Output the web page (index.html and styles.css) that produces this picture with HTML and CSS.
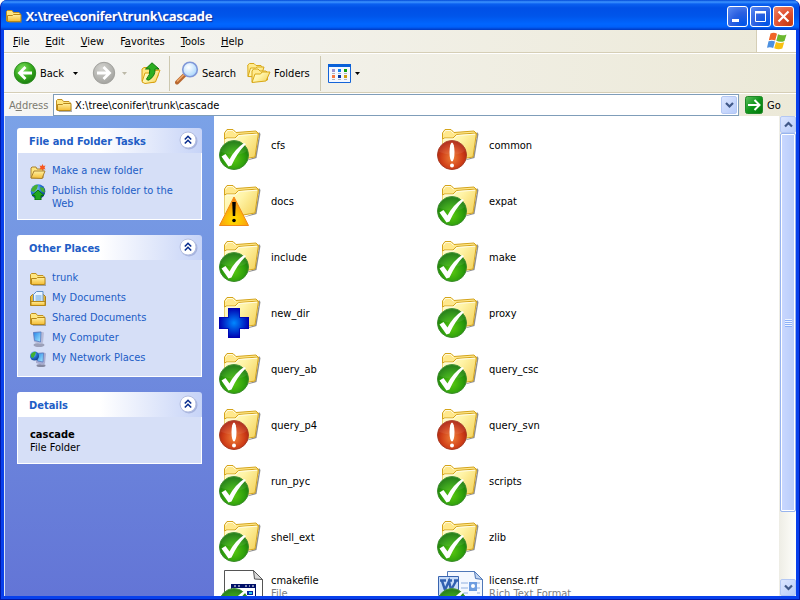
FILE: index.html
```html
<!DOCTYPE html>
<html lang="en">
<head>
<meta charset="utf-8">
<title>X:\tree\conifer\trunk\cascade</title>
<link rel="stylesheet" href="styles.css">
</head>
<body>
<svg class="defs" aria-hidden="true">
  <defs>
    <linearGradient id="gFolder" x1="0" y1="0" x2="1" y2=".6"><stop offset="0" stop-color="#fffdd0"/><stop offset=".5" stop-color="#fff4a8"/><stop offset="1" stop-color="#f6d868"/></linearGradient>
    <linearGradient id="gSmall" x1="0" y1="0" x2="0" y2="1"><stop offset="0" stop-color="#fff0a0"/><stop offset="1" stop-color="#f4bc34"/></linearGradient>
    <radialGradient id="gOk" cx=".5" cy=".65" r=".6"><stop offset="0" stop-color="#58c810"/><stop offset=".6" stop-color="#2fa00c"/><stop offset="1" stop-color="#187808"/></radialGradient>
    <radialGradient id="gBad" cx=".5" cy=".6" r=".6"><stop offset="0" stop-color="#f08038"/><stop offset=".6" stop-color="#d04018"/><stop offset="1" stop-color="#a81c0c"/></radialGradient>
    <radialGradient id="gWarn" cx=".5" cy=".8" r=".7"><stop offset="0" stop-color="#ffe000"/><stop offset="1" stop-color="#f88810"/></radialGradient>
    <radialGradient id="gPlus"><stop offset="0" stop-color="#0088ff"/><stop offset="1" stop-color="#0000b0"/></radialGradient>
    <radialGradient id="gBack" cx=".4" cy=".3" r=".7"><stop offset="0" stop-color="#7ee060"/><stop offset=".6" stop-color="#35a81c"/><stop offset="1" stop-color="#1c8010"/></radialGradient>
    <radialGradient id="gFwd" cx=".4" cy=".3" r=".7"><stop offset="0" stop-color="#d4d4d0"/><stop offset="1" stop-color="#a4a4a0"/></radialGradient>
    <radialGradient id="gLens" cx=".4" cy=".35" r=".7"><stop offset="0" stop-color="#ffffff"/><stop offset="1" stop-color="#a4d4fc"/></radialGradient>
    <linearGradient id="gGo" x1="0" y1="0" x2="1" y2="1"><stop offset="0" stop-color="#60c060"/><stop offset=".5" stop-color="#10951c"/><stop offset="1" stop-color="#007808"/></linearGradient>
    <linearGradient id="gScreen" x1="0" y1="0" x2="1" y2="1"><stop offset="0" stop-color="#2484e8"/><stop offset="1" stop-color="#a8ecff"/></linearGradient>
    <radialGradient id="gGlobe" cx=".35" cy=".3" r=".8"><stop offset="0" stop-color="#90d8ff"/><stop offset=".5" stop-color="#2470d0"/><stop offset="1" stop-color="#103880"/></radialGradient>
  </defs>
  <symbol id="folder" viewBox="0 0 48 48">
    <path d="M24 39.500 37.500 36 41.500 12 40 10v3l-4 22z" fill="#444" opacity=".6"/>
    <path d="M5.500 36V11L8 7.500h6l3 3L37 9l2 2v5L16 38z" fill="#ffe88c" stroke="#d4a41c"/>
    <path d="M6.500 11.500 8.500 8.500h5l3 3" fill="none" stroke="#fffbe0"/>
    <path d="M5.500 37.500V17.500l1.500-1.500h9l3.500-3.500 20-1.500-3.500 24-18 3z" fill="url(#gFolder)"/>
    <path d="M6 17l1-1h9l3.500-3.500 20-1.500-3.500 24-18 3" fill="none" stroke="#d4a41c"/>
    <path d="M7.500 17h9l3.500-3.500 18-1.300" fill="none" stroke="#fffce8"/>
  </symbol>
  <symbol id="ok" viewBox="0 0 48 48">
    <circle cx="15" cy="33" r="14.500" fill="url(#gOk)" stroke="#3c8c2c"/>
    <path d="M2 30a13 12 0 0 1 26-1Q18 36 2 30z" fill="#fff" opacity=".08"/>
    <path d="M2.500 34.500l4-2.500 4 5.500Q16 27 25 21l2 1Q18 31 12.500 43.500l-3 1z" fill="#fff"/>
  </symbol>
  <symbol id="bad" viewBox="0 0 48 48">
    <circle cx="15" cy="33" r="14.500" fill="url(#gBad)" stroke="#a83c24"/>
    <path d="M2 30a13 12 0 0 1 26-1Q18 36 2 30z" fill="#fff" opacity=".08"/>
    <ellipse cx="15" cy="30" rx="2.500" ry="9.500" fill="#fff"/><circle cx="15" cy="43.500" r="2" fill="#fff"/>
  </symbol>
  <symbol id="warn" viewBox="0 0 48 48">
    <path d="M15 19 29.500 47.500H.5z" fill="url(#gWarn)" stroke="#f08818"/>
    <path d="M13.200 24h3.600l-.6 14h-2.400z"/><circle cx="15" cy="42.500" r="1.800"/>
  </symbol>
  <symbol id="plus" viewBox="0 0 48 48">
    <path d="M9 18h12v9h9v12h-9v9H9v-9H0V27h9z" fill="url(#gPlus)"/>
    <path d="M9.500 18.500h11v9h9v11h-9v9h-11v-9h-9v-11h9z" fill="none" stroke="#0000b0" opacity=".7"/>
  </symbol>
  <symbol id="small-folder" viewBox="0 0 16 16">
    <path d="M2 13h13.500V6l.5 9H3z" fill="#777" opacity=".6"/>
    <path d="M.5 13V3.500l1-1h4.500l1.500 2H13l1 1V13z" fill="#ffe680" stroke="#c09020"/>
    <path d="M1.500 13.500v-6h5l1-1h7.500V13l-1 .5z" fill="url(#gSmall)" stroke="#b88818"/>
  </symbol>
  <symbol id="chevrons" viewBox="0 0 20 20">
    <circle cx="11" cy="11" r="8.500" fill="#7080b8" opacity=".4"/>
    <circle cx="10" cy="10" r="8" fill="#fff" stroke="#b4bee0"/>
    <path d="m6.800 9.500 3.200-3.200 3.200 3.200m-6.400 4 3.200-3.200 3.200 3.200" fill="none" stroke="#0c3090" stroke-width="1.600"/>
  </symbol>
</svg>

<div class="window">
  <header class="titlebar">
    <svg class="i16"><use href="#small-folder"/></svg>
    <h1>X:\tree\conifer\trunk\cascade</h1>
    <button class="wbtn" aria-label="Minimize"><svg viewBox="0 0 21 21"><path d="M5 13h7v3H5z" fill="#fff"/></svg></button>
    <button class="wbtn" aria-label="Maximize"><svg viewBox="0 0 21 21"><path d="M5.500 6h10v9.500h-10z" fill="none" stroke="#fff"/><path d="M5 5h11v2.500H5z" fill="#fff"/></svg></button>
    <button class="wbtn close" aria-label="Close"><svg viewBox="0 0 21 21"><path d="m5.500 5.500 10 10m0-10-10 10" stroke="#fff" stroke-width="2.200"/></svg></button>
  </header>

  <div class="frame">
    <div class="menurow">
      <nav class="menu">
        <button><u>F</u>ile</button><button><u>E</u>dit</button><button><u>V</u>iew</button><button>F<u>a</u>vorites</button><button><u>T</u>ools</button><button><u>H</u>elp</button>
      </nav>
      <div class="brand">
        <svg width="20" height="18" viewBox="0 0 20 18">
          <path d="M3.500 1.500Q7 0 10 1.800L8.200 8.500Q5 7 1.800 8.200z" fill="#f06428"/>
          <path d="M11 2.300q4 2 8.500.2l-2 6.500q-4 1.800-8.200-.2z" fill="#6cb830"/>
          <path d="M1.500 9.200Q5 8 8 9.500L6.200 16Q3 14.500 0 15.800z" fill="#4c90e0"/>
          <path d="M9 9.900q4 2 8.200.3l-1.900 6.300q-4 1.700-8.100-.3z" fill="#f8c010"/>
        </svg>
      </div>
    </div>

    <div class="toolbar">
      <button class="tool back">
        <svg width="24" height="24" viewBox="0 0 24 24"><circle cx="12" cy="12" r="10.700" fill="url(#gBack)" stroke="#2c8c20"/><path d="M19 12H7m5.500-6L6.500 12l6 6" fill="none" stroke="#fff" stroke-width="2.800"/></svg>
        <span>Back</span>
      </button>
      <button class="drop" aria-label="Back history"><svg width="5" height="3"><path d="M0 0h5L2.500 3z"/></svg></button>
      <button class="tool forward" aria-label="Forward">
        <svg width="24" height="24" viewBox="0 0 24 24"><circle cx="12" cy="12" r="10.700" fill="url(#gFwd)" stroke="#a0a09c"/><path d="M5 12h12M11.500 6l6 6-6 6" fill="none" stroke="#fff" stroke-width="2.800"/></svg>
      </button>
      <button class="drop" aria-label="Forward history"><svg width="5" height="3"><path d="M0 0h5L2.500 3z" fill="#bcb9a8"/></svg></button>
      <button class="tool up" aria-label="Up">
        <svg width="20" height="22" viewBox="0 0 20 22">
          <path d="M1 19V7l2-1.500h4l1.500 2L17 6v8l-4 6.500z" fill="#ffe680" stroke="#d8a010"/>
          <path d="M1 20 4 11h5l1.500-2 8.500-1-4.500 12L4 21.500z" fill="url(#gFolder)" stroke="#d8a010"/>
          <path d="M11 .800 18 7h-4Q14.500 14 8 18q-2 .5-2.500-1Q9.500 13 8.800 7H4.500z" fill="#2cae20" stroke="#107810"/>
        </svg>
      </button>
      <span class="sep"></span>
      <button class="tool search">
        <svg width="24" height="24" viewBox="0 0 24 24"><path d="m2 21.500 8-8" stroke="#b86830" stroke-width="4" stroke-linecap="round"/><path d="m2 20.500 7-7" stroke="#f0a868" stroke-width="1.500"/><circle cx="15" cy="8.500" r="7.300" fill="url(#gLens)" stroke="#8098d8" stroke-width="1.600"/></svg>
        <span>Search</span>
      </button>
      <button class="tool folders">
        <svg width="24" height="22" viewBox="0 0 24 22">
          <path d="M1 14.500 .8 3 2.500 1.500H7l2 2h5l1.500 2v9z" fill="#ffeb90" stroke="#d8a818"/>
          <path d="M1 14.500 3.500 6h5L10 5h7l-3 10z" fill="url(#gFolder)" stroke="#d8a818"/>
          <path d="M5 20V9l1.500-2H11l2 2h6l1.500 1.500V18z" fill="#ffeb90" stroke="#d8a818"/>
          <path d="M5 20.500 8 12h5.500l1.500-2h8L19 19z" fill="url(#gFolder)" stroke="#d8a818"/>
        </svg>
        <span>Folders</span>
      </button>
      <span class="sep"></span>
      <button class="tool views" aria-label="Views">
        <svg width="23" height="19" viewBox="0 0 23 19"><path d="M.5.5h22v18H.5z" fill="#f4f8ff" stroke="#1464d8"/><path d="M0 0h23v3H0z" fill="#0860d8"/>
          <path d="M4 5h3v3H4z" fill="#9c94d0"/><path d="M10 5h3v3h-3z" fill="#1080f0"/><path d="M16 5h3v3h-3z" fill="#10a010"/><path d="M4 11h3v3H4z" fill="#f87840"/><path d="M10 11h3v3h-3z" fill="#0838a0"/><path d="M16 11h3v3h-3z" fill="#d0a010"/>
          <path d="M4 9.500h3m3 0h3m3 0h3M4 15.500h3m3 0h3m3 0h3" stroke="#b0b4c0"/></svg>
      </button>
      <button class="drop" aria-label="Choose view"><svg width="5" height="3"><path d="M0 0h5L2.500 3z"/></svg></button>
    </div>

    <form class="address">
      <label for="addr">A<u>d</u>dress</label>
      <div class="combo">
        <svg class="i16"><use href="#small-folder"/></svg>
        <input id="addr" type="text" value="X:\tree\conifer\trunk\cascade">
        <button type="button" class="bluebtn" aria-label="Show addresses"><svg width="9" height="7" viewBox="0 0 9 7"><path d="m1 1 3.500 3.500L8 1" fill="none" stroke="#405888" stroke-width="2.200"/></svg></button>
      </div>
      <button type="button" class="go"><svg width="18" height="18" viewBox="0 0 18 18"><rect x=".5" y=".5" width="17" height="17" rx="2" fill="url(#gGo)" stroke="#208828"/><path d="M3 9h11M9.500 4l5 5-5 5" fill="none" stroke="#fff" stroke-width="2"/></svg><span>Go</span></button>
    </form>

    <div class="content">
      <aside class="sidebar">
        <section class="panel">
          <header><h2>File and Folder Tasks</h2><button aria-label="Collapse File and Folder Tasks"><svg width="20" height="20"><use href="#chevrons"/></svg></button></header>
          <ul>
            <li><svg class="i16" viewBox="0 0 16 16"><path d="M1 14V4l1-1h4l1 2h6v9z" fill="#ffe680" stroke="#a88030"/><path d="m1 14 3-7h11l-3 7.500z" fill="url(#gSmall)" stroke="#a88030"/><path d="m12.500 0 1 2 2-.5-1 2 1 2-2-.5-1 1.500-1-1.500-2 .5 1-2-1-2 2 .5z" fill="#f85820"/></svg><a href="#">Make a new folder</a></li>
            <li><svg class="i16" viewBox="0 0 16 16"><circle cx="8" cy="7.500" r="7.300" fill="url(#gGlobe)"/><path d="M2 4q3-4 6-3l-1 4-3 3-3-1zM10 3l4 1 1 5-4-2z" fill="#48b030"/><path d="m8 6 6 5.500h-3V16H5v-4.500H2z" fill="#20a820" stroke="#087010"/></svg><a href="#">Publish this folder to the Web</a></li>
          </ul>
        </section>
        <section class="panel">
          <header><h2>Other Places</h2><button aria-label="Collapse Other Places"><svg width="20" height="20"><use href="#chevrons"/></svg></button></header>
          <ul>
            <li><svg class="i16"><use href="#small-folder"/></svg><a href="#">trunk</a></li>
            <li><svg class="i16" viewBox="0 0 16 16"><path d="M.5 14.500V5.500l2-2h11l2 2v9z" fill="#e8b838" stroke="#a88020"/><path d="M3.500 12V3.500l3-3h6.500V12z" fill="#e8f4ff" stroke="#6090c8"/><path d="M5.500 5h6m-6 2h6m-6 2h6" stroke="#60a0e0"/><path d="M1 10.500h14v4H1z" fill="url(#gSmall)" stroke="#b88818"/></svg><a href="#">My Documents</a></li>
            <li><svg class="i16"><use href="#small-folder"/></svg><a href="#">Shared Documents</a></li>
            <li><svg class="i16" viewBox="0 0 16 16"><ellipse cx="9" cy="14" rx="5.500" ry="2" fill="#9ca0b8"/><path d="m3 1 8-.5 3 1-1 10-3 1.500-6-2z" fill="#b8bcd8"/><path d="m3.500 1.500 7.500-.5-.5 10-6-1.500z" fill="url(#gScreen)" stroke="#5878c0" stroke-width=".8"/></svg><a href="#">My Computer</a></li>
            <li><svg class="i16" viewBox="0 0 16 16"><ellipse cx="11" cy="14.500" rx="4.500" ry="1.500" fill="#8488a0"/><path d="m6 2 8-.5 2 1-1 10-3 1.500-6-2z" fill="#a8acd0"/><path d="m6.500 2.500 7-.5-.5 9-5.500-1z" fill="url(#gScreen)" stroke="#5878c0" stroke-width=".8"/><circle cx="4.500" cy="5" r="4.500" fill="url(#gGlobe)"/><path d="M1 3q3-3 5-2L5 4 3 7 1 6z" fill="#40b030"/></svg><a href="#">My Network Places</a></li>
          </ul>
        </section>
        <section class="panel">
          <header><h2>Details</h2><button aria-label="Collapse Details"><svg width="20" height="20"><use href="#chevrons"/></svg></button></header>
          <div class="details"><strong>cascade</strong><span>File Folder</span></div>
        </section>
      </aside>

      <main class="files">
        <div class="item"><svg><use href="#folder"/><use href="#ok"/></svg><span>cfs</span></div>
        <div class="item"><svg><use href="#folder"/><use href="#bad"/></svg><span>common</span></div>
        <div class="item"><svg><use href="#folder"/><use href="#warn"/></svg><span>docs</span></div>
        <div class="item"><svg><use href="#folder"/><use href="#ok"/></svg><span>expat</span></div>
        <div class="item"><svg><use href="#folder"/><use href="#ok"/></svg><span>include</span></div>
        <div class="item"><svg><use href="#folder"/><use href="#ok"/></svg><span>make</span></div>
        <div class="item"><svg><use href="#folder"/><use href="#plus"/></svg><span>new_dir</span></div>
        <div class="item"><svg><use href="#folder"/><use href="#ok"/></svg><span>proxy</span></div>
        <div class="item"><svg><use href="#folder"/><use href="#ok"/></svg><span>query_ab</span></div>
        <div class="item"><svg><use href="#folder"/><use href="#ok"/></svg><span>query_csc</span></div>
        <div class="item"><svg><use href="#folder"/><use href="#bad"/></svg><span>query_p4</span></div>
        <div class="item"><svg><use href="#folder"/><use href="#bad"/></svg><span>query_svn</span></div>
        <div class="item"><svg><use href="#folder"/><use href="#ok"/></svg><span>run_pyc</span></div>
        <div class="item"><svg><use href="#folder"/><use href="#ok"/></svg><span>scripts</span></div>
        <div class="item"><svg><use href="#folder"/><use href="#ok"/></svg><span>shell_ext</span></div>
        <div class="item"><svg><use href="#folder"/><use href="#ok"/></svg><span>zlib</span></div>
        <div class="item file"><svg viewBox="0 0 48 48"><path d="M5.500.5h29l9 9V46h-38z" fill="#fff" stroke="#555"/><path d="m34.500.5 1 8.500 8 .5z" fill="#d8d8d8" stroke="#555"/><path d="M12 14h25v24H12z" fill="#001068"/><path d="M13 18h23v19H13z" fill="#fff"/><path d="M15 16h2m2 0h2m5 0h2m2 0h1m2 0h2" stroke="#fff"/><path d="M16 20h6v5h-6zm12 1h6v4h-6z" fill="#0828a0"/><path d="M30 22h3v2h-3z" fill="#30c8e8"/><use href="#ok"/></svg><span>cmakefile<small>File</small></span></div>
        <div class="item file"><svg viewBox="0 0 48 48"><path d="M10.500 1.500h27l8 8V46h-35z" fill="#f4f8ff" stroke="#5078b8"/><path d="m37.500 1.500 1 7 7 1z" fill="#c0d4f0" stroke="#5078b8"/><path d="M24 13h7m-7 5h7m-7 5h7m9-10h3m-3 5h3m-3 5h3" stroke="#90b0e0"/><path d="M32 12h8v9h-8z" fill="#6c9ce0"/><circle cx="36" cy="16" r="2" fill="#fff"/><path d="M1.500 6.500h20v19h-20z" fill="#c8dcf8" stroke="#3864b0"/><path d="M3 10.500h6m2 0h4m2 0h4M5 11l3 9 4-9 2 9 5-9" fill="none" stroke="#3060b0" stroke-width="2.400"/><use href="#ok"/></svg><span>license.rtf<small>Rich Text Format</small></span></div>
      </main>

      <div class="scrollbar">
        <button class="bluebtn" aria-label="Scroll up"><svg width="9" height="7" viewBox="0 0 9 7"><path d="m1 5.500L4.500 2 8 5.500" fill="none" stroke="#405888" stroke-width="2.200"/></svg></button>
        <div class="track"><div class="thumb"></div></div>
        <button class="bluebtn" aria-label="Scroll down"><svg width="9" height="7" viewBox="0 0 9 7"><path d="m1 1.500L4.500 5 8 1.500" fill="none" stroke="#405888" stroke-width="2.200"/></svg></button>
      </div>
    </div>
  </div>
</div>
</body>
</html>
```
FILE: styles.css
```css
* { box-sizing: border-box; }
html, body { margin: 0; height: 100%; background: #fff; }
body, button, input {
  font: 11px/13px "DejaVu Sans Condensed", Tahoma, "DejaVu Sans", sans-serif;
  color: #000;
}
button { border: 0; padding: 0; background: none; display: flex; align-items: center; }
svg { display: block; flex: none; }
.defs { position: absolute; width: 0; height: 0; }
.i16 { width: 16px; height: 16px; }

.window {
  display: flex; flex-direction: column; height: 100vh; overflow: hidden;
  border: solid #0018a8; border-width: 0 1px 1px;
  background: #0040e0; border-radius: 7px 7px 0 0;
}
.titlebar {
  display: flex; align-items: center; gap: 2px; flex: none;
  height: 30px; padding: 2px 5px 0;
  background: linear-gradient(#0048d8 0, #3d95ff 2px, #0a60f0 4px, #0050e6 8px, #0055ea 16px, #0066ff 24px, #0060fa 27px, #0038c0 30px);
}
.titlebar h1 {
  flex: 1; margin: 0 0 0 2px; color: #fff; text-shadow: 0 0 1px #fff, 1px 1px 1px #0a1883;
  font: 600 13px/16px "Open Sans", "Trebuchet MS", sans-serif;
}
.wbtn {
  width: 21px; height: 21px; border: 1px solid #fff; border-radius: 3px;
  background: radial-gradient(circle at 80% 90%, #0054e8, #2c60e0 50%, #5c8cf4);
}
.wbtn svg { width: 21px; height: 21px; margin: -1px; }
.wbtn.close { background: radial-gradient(circle at 80% 90%, #c83c10, #e05030 50%, #f08868); }

.frame {
  display: flex; flex-direction: column; flex: 1; min-height: 0;
  border: solid #0840ec; border-width: 0 3px 3px;
  background: linear-gradient(90deg, #f6f6f4, #ece9d8);
}
.menurow { display: flex; height: 23px; flex: none; border-bottom: 1px solid #d5ceb6; }
.menu { display: flex; flex: 1; padding-left: 1px; border-right: 1px solid #d5ceb6; }
.menu button { padding: 0 8px; display: block; }
.brand { width: 39px; background: #fff; display: grid; place-items: center; }

.toolbar {
  display: flex; align-items: center; height: 40px; flex: none;
  padding-left: 9px; border-top: 1px solid #fff; border-bottom: 1px solid #d5ceb6;
}
.tool { gap: 3px; }
.drop { width: 17px; height: 24px; justify-content: center; }
.back { margin-right: 3px; }
.forward { margin-left: 8px; }
.up { margin-left: 8px; }
.sep { width: 1px; height: 35px; margin: 0 5px 0 8px; background: #cdc8b0; }
.folders { margin-left: 11px; }
.folders + .sep { margin-left: 10px; }
.views { margin-left: 2px; }
.views + .drop { width: 13px; }

.address { display: flex; align-items: center; height: 23px; flex: none; border-top: 1px solid #fff; padding-left: 5px; }
.address label { width: 44px; color: #7c7a70; }
.combo { flex: 1; display: flex; align-items: center; gap: 3px; height: 22px; padding: 0 1px 0 2px; border: 1px solid #7f9db9; background: #fff; }
.combo input { flex: 1; min-width: 0; border: 0; padding: 0; background: none; outline: 0; }
.bluebtn {
  width: 16px; height: 18px; flex: none; justify-content: center;
  border: 1px solid #b4c8f4; border-radius: 2px; background: linear-gradient(135deg, #dce6ff, #b8ccfa);
}
.go { width: 57px; padding-left: 6px; gap: 4px; }

.content { display: flex; flex: 1; min-height: 0; background: #fff; }
.sidebar {
  width: 210px; flex: none; overflow: hidden; padding: 12px 12px 0;
  display: flex; flex-direction: column; gap: 15px;
  background: linear-gradient(#7ba2e7, #6375d6); border-left: 1px solid #d8e4f8;
}
.panel header {
  display: flex; align-items: center; justify-content: space-between;
  height: 25px; padding: 0 4px 0 12px; border-radius: 3px 3px 0 0;
  background: linear-gradient(90deg, #fff 45%, #c6d3f7);
}
.panel h2 { margin: 0; padding-top: 2px; color: #215dc6; font: bold 11px/13px "DejaVu Sans Condensed", Tahoma, sans-serif; }
.panel header button { padding-bottom: 2px; }
.panel ul, .details { margin: 0; padding: 11px 12px 9px; border: 1px solid #fff; border-top: 0; background: #d6dff7; list-style: none; }
.panel li { display: flex; gap: 6px; margin-bottom: 4px; }
.panel li:last-child { margin-bottom: 0; }
.panel a { color: #215dc6; text-decoration: none; }
.details { display: flex; flex-direction: column; }

.files {
  flex: 1; min-width: 0; overflow: hidden; padding: 2px 0 0 5px;
  display: grid; grid-template-columns: repeat(auto-fill, 218px); grid-auto-rows: 56px;
}
.item { display: flex; align-items: center; gap: 4px; }
.item svg { width: 48px; height: 48px; }
.item span { padding-bottom: 2px; }
.item.file span { padding-bottom: 15px; }
.item small { display: block; font-size: 11px; color: #808080; }

.scrollbar { width: 17px; flex: none; display: flex; flex-direction: column; padding: 0 0 0 1px; background: linear-gradient(90deg, #eeede5, #fefefb); }
.scrollbar .bluebtn { height: 17px; }
.track { flex: 1; }
.thumb {
  height: 85%; border: 1px solid #98b4ee; border-radius: 2px; box-shadow: inset 0 0 0 1px #fff;
  background:
    repeating-linear-gradient(#eef4ff 0 1px, #8cb0f8 1px 2px) center / 7px 8px no-repeat,
    linear-gradient(90deg, #cad8ff, #b8ccfa);
}
```
